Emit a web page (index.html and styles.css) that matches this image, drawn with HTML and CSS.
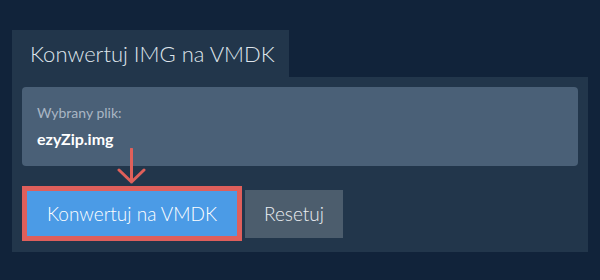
FILE: index.html
```html
<!DOCTYPE html>
<html>
<head>
<meta charset="utf-8">
<link rel="stylesheet" href="styles.css">
</head>
<body>
<div class="wrap">
  <div class="tab">Konwertuj IMG na VMDK</div>
  <div class="panel">
    <div class="file">
      <div class="label">Wybrany plik:</div>
      <div class="name">ezyZip.img</div>
    </div>
    <div class="actions">
      <div class="convert-wrap">
        <svg class="arrow" width="30" height="38" viewBox="0 0 30 38">
          <path d="M14.5 1 V34 M2 22 L14.5 34 L27 22" fill="none" stroke="#e0605a" stroke-width="3" stroke-linecap="round" stroke-linejoin="round"/>
        </svg>
        <button class="btn convert">Konwertuj na VMDK</button>
      </div>
      <button class="btn reset">Resetuj</button>
    </div>
  </div>
</div>
</body>
</html>
```
FILE: styles.css
```css
html, body {
  margin: 0;
  padding: 0;
  background: #11233a;
  width: 600px;
  height: 280px;
  overflow: hidden;
  font-family: Lato, "Open Sans", sans-serif;
}
.wrap {
  padding: 30px 12px 0 12px;
}
.tab {
  display: inline-block;
  width: 277px;
  height: 47px;
  box-sizing: border-box;
  background: #22364b;
  color: #dfe5ec;
  font-size: 22px;
  font-weight: 300;
  line-height: 47px;
  padding-left: 18px;
}
.panel {
  background: #22364b;
  height: 175px;
  box-sizing: border-box;
  padding: 10px 10px 0 10px;
}
.file {
  background: #4a6077;
  border-radius: 4px;
  height: 79px;
  box-sizing: border-box;
  padding: 18px 0 0 15px;
}
.label {
  color: #a9b6c4;
  font-size: 14px;
  line-height: 16px;
}
.name {
  color: #ffffff;
  font-weight: bold;
  font-size: 16px;
  line-height: 20px;
  margin-top: 8px;
}
.actions {
  display: flex;
  align-items: center;
  margin-top: 20px;
  gap: 3px;
}
.convert-wrap {
  position: relative;
}
.arrow {
  position: absolute;
  left: 95px;
  top: -38px;
}
.btn {
  border: none;
  margin: 0;
  font-family: Lato, "Open Sans", sans-serif;
  font-size: 19px;
  font-weight: 300;
  color: #ffffff;
  cursor: pointer;
}
.convert {
  display: block;
  width: 220px;
  height: 55px;
  background: #4b9be6;
  border: 5px solid #df5f5b;
  box-sizing: border-box;
  padding: 0;
}
.reset {
  width: 98px;
  height: 48px;
  background: #4c5d6d;
  color: #e9edf1;
}
```
